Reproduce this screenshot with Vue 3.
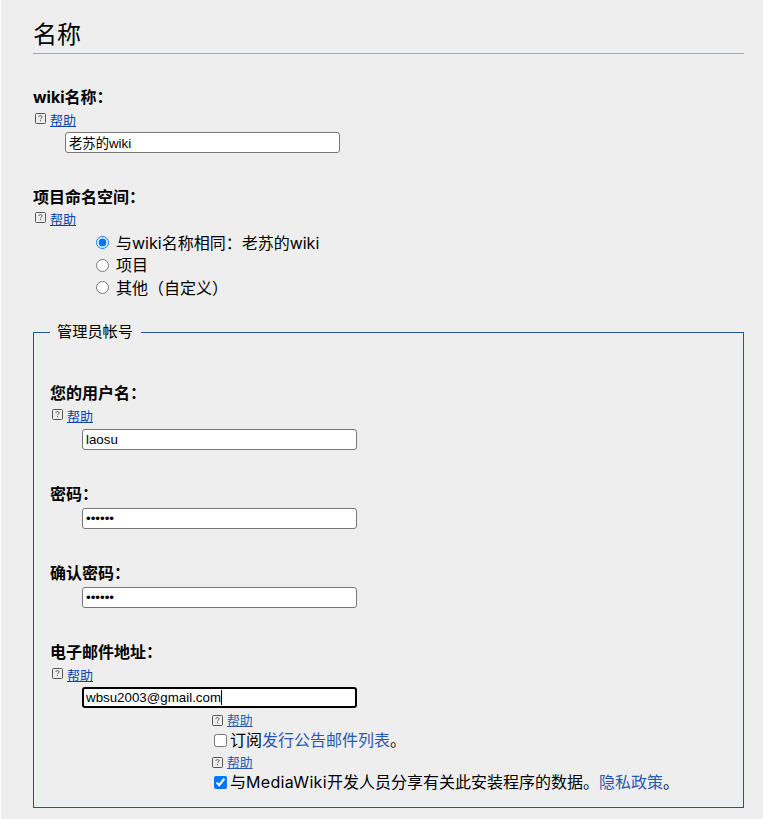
<script setup>
import { ref } from 'vue'

const wikiName = ref('老苏的wiki')
const namespace = ref('same')
const username = ref('laosu')
const password = ref('123456')
const confirm = ref('123456')
const email = ref('wbsu2003@gmail.com')
const subscribe = ref(false)
const shareData = ref(true)

const namespaces = [
  { value: 'same', label: '与wiki名称相同：老苏的wiki' },
  { value: 'project', label: '项目' },
  { value: 'other', label: '其他（自定义）' }
]
</script>

<template>
  <div class="page">
    <h2 class="title">名称</h2>

    <div class="field field--first">
      <label class="field-label">wiki名称：</label>
      <div class="help">
        <svg class="help-icon" width="11" height="11" viewBox="0 0 11 11" fill="none">
          <rect x="0.5" y="0.5" width="10" height="10" rx="1" stroke="#555" />
          <path d="M3.9 4C3.9 3 4.6 2.6 5.5 2.6s1.6.5 1.6 1.3c0 1.1-1.6 1.1-1.6 2.3M5.5 7.2v1" stroke="#555" />
        </svg>
        <a href="#" class="help-link">帮助</a>
      </div>
      <input v-model="wikiName" class="text-input" type="text" />
    </div>

    <div class="field field--namespace">
      <label class="field-label">项目命名空间：</label>
      <div class="help">
        <svg class="help-icon" width="11" height="11" viewBox="0 0 11 11" fill="none">
          <rect x="0.5" y="0.5" width="10" height="10" rx="1" stroke="#555" />
          <path d="M3.9 4C3.9 3 4.6 2.6 5.5 2.6s1.6.5 1.6 1.3c0 1.1-1.6 1.1-1.6 2.3M5.5 7.2v1" stroke="#555" />
        </svg>
        <a href="#" class="help-link">帮助</a>
      </div>
      <ul class="radio-list">
        <li v-for="item in namespaces" :key="item.value">
          <label class="radio-row">
            <input v-model="namespace" type="radio" name="ns" :value="item.value" />
            <span>{{ item.label }}</span>
          </label>
        </li>
      </ul>
    </div>

    <fieldset class="admin">
      <legend>管理员帐号</legend>

      <div class="field">
        <label class="field-label">您的用户名：</label>
        <div class="help help--tall">
          <svg class="help-icon" width="11" height="11" viewBox="0 0 11 11" fill="none">
            <rect x="0.5" y="0.5" width="10" height="10" rx="1" stroke="#555" />
            <path d="M3.9 4C3.9 3 4.6 2.6 5.5 2.6s1.6.5 1.6 1.3c0 1.1-1.6 1.1-1.6 2.3M5.5 7.2v1" stroke="#555" />
          </svg>
          <a href="#" class="help-link">帮助</a>
        </div>
        <input v-model="username" class="text-input" type="text" />
      </div>

      <div class="field field--plain">
        <label class="field-label">密码：</label>
        <input v-model="password" class="text-input text-input--spaced" type="password" />
      </div>

      <div class="field field--plain">
        <label class="field-label">确认密码：</label>
        <input v-model="confirm" class="text-input text-input--spaced" type="password" />
      </div>

      <div class="field field--plain">
        <label class="field-label">电子邮件地址：</label>
        <div class="help">
          <svg class="help-icon" width="11" height="11" viewBox="0 0 11 11" fill="none">
            <rect x="0.5" y="0.5" width="10" height="10" rx="1" stroke="#555" />
            <path d="M3.9 4C3.9 3 4.6 2.6 5.5 2.6s1.6.5 1.6 1.3c0 1.1-1.6 1.1-1.6 2.3M5.5 7.2v1" stroke="#555" />
          </svg>
          <a href="#" class="help-link">帮助</a>
        </div>
        <div class="focus-wrap">
          <input v-model="email" class="text-input text-input--focus" type="text" />
          <span class="caret"></span>
        </div>
      </div>

      <div class="options">
        <div class="help help--small">
          <svg class="help-icon" width="11" height="11" viewBox="0 0 11 11" fill="none">
            <rect x="0.5" y="0.5" width="10" height="10" rx="1" stroke="#555" />
            <path d="M3.9 4C3.9 3 4.6 2.6 5.5 2.6s1.6.5 1.6 1.3c0 1.1-1.6 1.1-1.6 2.3M5.5 7.2v1" stroke="#555" />
          </svg>
          <a href="#" class="help-link help-link--light">帮助</a>
        </div>
        <label class="check-row">
          <input v-model="subscribe" type="checkbox" />
          <span>订阅<a href="#" class="plain-link">发行公告邮件列表</a>。</span>
        </label>
        <div class="help help--small">
          <svg class="help-icon" width="11" height="11" viewBox="0 0 11 11" fill="none">
            <rect x="0.5" y="0.5" width="10" height="10" rx="1" stroke="#555" />
            <path d="M3.9 4C3.9 3 4.6 2.6 5.5 2.6s1.6.5 1.6 1.3c0 1.1-1.6 1.1-1.6 2.3M5.5 7.2v1" stroke="#555" />
          </svg>
          <a href="#" class="help-link help-link--light">帮助</a>
        </div>
        <label class="check-row">
          <input v-model="shareData" type="checkbox" />
          <span>与<span class="brand">MediaWiki</span>开发人员分享有关此安装程序的数据。<a href="#" class="plain-link">隐私政策</a>。</span>
        </label>
      </div>
    </fieldset>
  </div>
</template>

<style>
html,
body {
  background: #fff;
}
</style>

<style scoped>
.page {
  box-sizing: border-box;
  height: 819px;
  margin-left: 1px;
  padding: 0 19px 0 32px;
  overflow: hidden;
  background: #eeeeee;
  color: #000;
  font-family: Inter, "Noto Sans CJK SC", sans-serif;
  font-size: 16px;
}

.title {
  margin: 0;
  padding-top: 19px;
  height: 34px;
  border-bottom: 1px solid #a2a9b1;
  font-size: 24px;
  font-weight: 400;
  line-height: 32px;
}

.field {
  display: flex;
  flex-direction: column;
  align-items: flex-start;
}

.field--first {
  margin-top: 31.4px;
}

.field--namespace {
  margin-top: 31.6px;
}

.field--namespace .help {
  height: 24px;
  margin-top: -1px;
}

.field--plain {
  margin-top: 32px;
}

.field-label {
  font-weight: 700;
  line-height: 24px;
}

.help {
  display: flex;
  align-items: flex-start;
  gap: 4px;
  height: 23px;
  padding-left: 2px;
  font-size: 13px;
  line-height: 22px;
}

.help--tall {
  height: 24px;
}

.help--small {
  height: 18px;
  font-size: 12.8px;
  line-height: 20px;
}

.help-icon {
  flex-shrink: 0;
  margin-top: 4px;
}

.help-link {
  color: #0645ad;
  font-weight: 400;
}

.help-link--light {
  color: #2a58ad;
}

.text-input {
  box-sizing: border-box;
  width: 275px;
  height: 21px;
  margin: 0 0 0 32px;
  padding: 1px 3px;
  border: 1px solid #767676;
  border-radius: 3px;
  background: #fff;
  color: #000;
  font-family: "Liberation Sans", "Noto Sans CJK SC", sans-serif;
  font-size: 13.33px;
}

.text-input--spaced {
  margin-top: 2px;
}

.text-input--focus {
  padding: 0 2px;
  border: 2px solid #000;
  outline: none;
}

.focus-wrap {
  position: relative;
  display: flex;
}

.caret {
  position: absolute;
  top: 3px;
  left: 171px;
  width: 1px;
  height: 15px;
  background: #000;
}

.radio-list {
  margin: 0;
  padding: 0 0 0 63px;
  list-style: none;
}

.radio-list li {
  height: 22.5px;
}

.radio-row {
  display: flex;
  align-items: center;
  line-height: 22px;
}

.radio-row input {
  width: 13px;
  height: 13px;
  margin: 0 7px 0 0;
}

.admin {
  margin: 23px 0 0;
  padding: 39px 16px 0;
  height: 486px;
  box-sizing: border-box;
  border: 1px solid #2450a0;
}

.admin legend {
  padding: 0 8px 0 7px;
  font-size: 15.2px;
  line-height: 20px;
}

.options {
  margin: 3px 0 0 160px;
}

.check-row {
  display: flex;
  align-items: center;
  margin-bottom: 2px;
  line-height: 22px;
}

.check-row input {
  width: 13px;
  height: 13px;
  margin: 0 3px 0 4px;
}

.brand {
  letter-spacing: 0.33px;
}

.plain-link {
  color: #2a58ad;
  text-decoration: none;
}
</style>
